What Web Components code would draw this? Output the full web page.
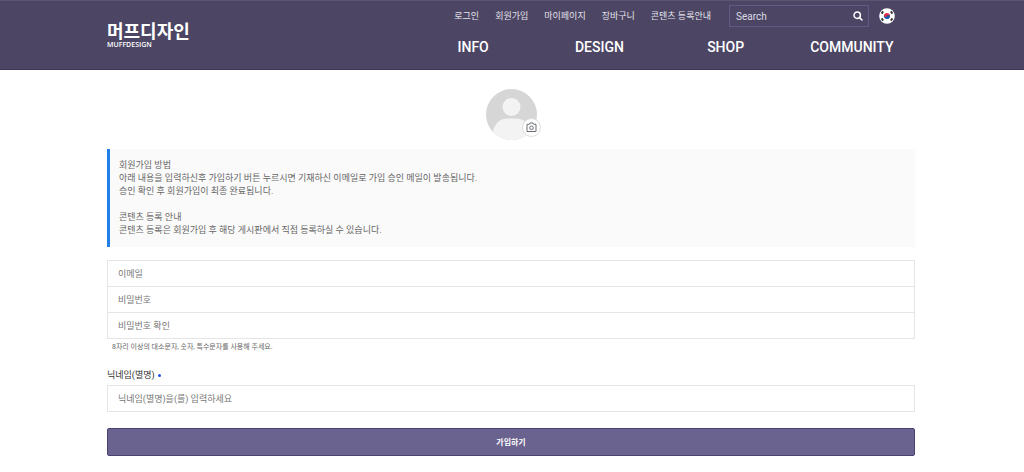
<!DOCTYPE html>
<html lang="ko">
<head>
<meta charset="utf-8">
<meta name="viewport" content="width=device-width, initial-scale=1">
<title>회원가입 - 머프디자인</title>
<style>
body {
  margin: 0;
  background: #fff;
  color: #666;
  font: 9px/13px Roboto, "Noto Sans CJK KR", sans-serif;
  --gutter: 0 109px 0 107px;
  --line: #e5e5e5;
}
</style>
</head>
<body>
<site-header></site-header>
<join-form></join-form>

<script>
function define(name, html, setup) {
  customElements.define(name, class extends HTMLElement {
    constructor() {
      super();
      this.attachShadow({ mode: 'open' }).innerHTML =
        '<style>*{box-sizing:border-box}a{color:inherit;text-decoration:none}input,button{font:inherit;margin:0}</style>' + html;
      if (setup) setup(this, this.shadowRoot);
    }
  });
}

define('site-logo', `
<style>
:host { display: block; color: #fff; }
a { display: flex; flex-direction: column; }
.ko { font: 700 18px/22px "Noto Sans CJK KR", sans-serif; }
.en { font: 600 7px/8px "Open Sans", sans-serif; }
</style>
<a href="#home"><span class="ko">머프디자인</span><span class="en">MUFFDESIGN</span></a>`);

define('search-box', `
<style>
:host { display: block; }
form { display: flex; align-items: center; width: 140px; height: 22px; padding: 0 5px 0 6px; border: 1px solid #625a84; }
input { flex: 1; min-width: 0; height: 20px; padding: 0; border: 0; outline: 0; background: none; color: #fff; font-size: 10px; }
input::placeholder { color: #dcdae4; opacity: 1; }
button { display: flex; padding: 0; border: 0; background: none; color: #fff; }
</style>
<form role="search"><input type="text" placeholder="Search" aria-label="Search">
<button type="button" aria-label="검색"><svg width="10" height="10" viewBox="0 0 10 10" fill="none" stroke="currentColor" stroke-width="1.5" stroke-linecap="round"><circle cx="4.2" cy="4.2" r="3.2"/><path d="M6.6 6.6 9 9"/></svg></button></form>`);

define('korea-flag', `
<style>:host, a { display: flex; }</style>
<a href="#ko" aria-label="한국어"><svg width="16" height="16" viewBox="0 0 16 16">
<circle cx="8" cy="8" r="7.8" fill="#fff"/>
<g transform="rotate(25 8 8)"><path d="M5 8a3 3 0 0 1 6 0z" fill="#e0303f"/><path d="M5 8a3 3 0 0 0 6 0z" fill="#1558b0"/><circle cx="6.5" cy="8" r="1.5" fill="#e0303f"/><circle cx="9.5" cy="8" r="1.5" fill="#1558b0"/></g>
<path d="m2.600 5.600 1.600-2.200M13.400 5.600l-1.600-2.200M2.600 10.400l1.600 2.200M13.400 10.400l-1.600 2.200" stroke="#333" stroke-width="1.800"/>
</svg></a>`);

define('site-header', `
<style>
:host { display: block; background: #4c4664; border-top: 1px solid #5b5573; border-bottom: 1px solid #3d375a; color: #fff; }
.inner { display: flex; justify-content: space-between; min-height: 68px; padding: var(--gutter); }
site-logo { padding-top: 18px; }
.right { display: flex; flex-direction: column; width: 505px; }
.top { display: flex; align-items: center; justify-content: flex-end; padding: 4px 20px 0 0; }
.links { display: flex; gap: 16px; margin-right: 18px; color: #e4e2ea; white-space: nowrap; }
search-box { margin-right: 10px; }
.main { display: grid; grid-template-columns: repeat(4, 1fr); padding-top: 10px; font: 500 14px/20px Roboto, sans-serif; text-align: center; }
</style>
<header class="inner">
<site-logo></site-logo>
<div class="right">
<div class="top"><nav class="links" aria-label="회원 메뉴"><a href="#login">로그인</a><a href="#join">회원가입</a><a href="#my">마이페이지</a><a href="#cart">장바구니</a><a href="#guide">콘텐츠 등록안내</a></nav><search-box></search-box><korea-flag></korea-flag></div>
<nav class="main" aria-label="주 메뉴"><a href="#info">INFO</a><a href="#design">DESIGN</a><a href="#shop">SHOP</a><a href="#community">COMMUNITY</a></nav>
</div>
</header>`);

define('profile-photo', `
<style>
:host { display: block; position: relative; width: 51px; height: 51px; }
svg { display: block; }
button { position: absolute; right: -4px; bottom: 3px; display: flex; align-items: center; justify-content: center; width: 19px; height: 19px; padding: 0; border: 1px solid #ddd; border-radius: 50%; background: #fff; color: #6b6e76; }
</style>
<svg width="51" height="51" viewBox="0 0 51 51" role="img" aria-label="프로필"><defs><clipPath id="c"><circle cx="25.5" cy="25.5" r="25.5"/></clipPath></defs>
<g clip-path="url(#c)"><path fill="#d6d6d6" d="M0 0h51v51H0z"/><circle cx="25.5" cy="18" r="9" fill="#f3f3f3"/><path fill="#f3f3f3" d="M6 51V45C9 33 15 29.5 21 29.5h9c7 0 12 4 15 15.500V51z"/></g></svg>
<button type="button" aria-label="사진 변경"><svg width="11" height="11" viewBox="0 0 11 11" fill="none" stroke="currentColor" stroke-width="1"><path d="M3.300 2.300 4 1h3l.7 1.300h2.300v7.200H1V2.300z" stroke-linejoin="round"/><circle cx="5.500" cy="5.800" r="1.800"/></svg></button>`);

define('info-note', `
<style>
:host { display: block; padding: 10px 9px; border-left: 3px solid #2080e8; background: #fafafa; color: #666; }
::slotted(p) { margin: 0 0 13px; }
::slotted(p:last-child) { margin: 0; }
</style><slot></slot>`);

define('text-field', `
<style>
:host { display: block; }
input { display: block; width: 100%; height: 27px; padding: 0 10px; border: 1px solid var(--line); border-radius: 0; outline: 0; background: #fff; color: #333; }
input::placeholder { color: #777; opacity: 1; }
label { display: flex; align-items: center; gap: 3px; margin-bottom: 3px; color: #333; }
label[hidden] { display: none; }
i { width: 3px; height: 3px; border-radius: 50%; background: #1a50f0; }
</style><label for="f"><slot></slot><i></i></label><input id="f">`, (el, root) => {
  const input = root.querySelector('input');
  input.type = el.getAttribute('type') || 'text';
  input.placeholder = el.getAttribute('placeholder');
  if (!el.hasAttribute('required')) {
    root.querySelector('label').hidden = true;
    input.setAttribute('aria-label', input.placeholder);
  }
});

define('join-form', `
<style>
:host { display: block; padding: var(--gutter); }
form { display: flex; flex-direction: column; padding: 19px 0 16px; }
profile-photo { align-self: center; margin-bottom: 9px; }
info-note { margin-bottom: 13px; }
.group { display: flex; flex-direction: column; }
.group text-field + text-field { margin-top: -1px; }
.help { margin: 2px 5px 15px; font-size: 7px; }
.submit { height: 28px; margin-top: 16px; padding: 0; border: 1px solid #4b4274; border-radius: 2px; background: #6b638f; color: #fff; font-size: 8px; font-weight: 700; }
</style>
<form>
<profile-photo></profile-photo>
<info-note><p>회원가입 방법<br>아래 내용을 입력하신후 가입하기 버튼 누르시면 기재하신 이메일로 가입 승인 메일이 발송됩니다.<br>승인 확인 후 회원가입이 최종 완료됩니다.</p><p>콘텐츠 등록 안내<br>콘텐츠 등록은 회원가입 후 해당 게시판에서 직접 등록하실 수 있습니다.</p></info-note>
<div class="group"><text-field type="email" placeholder="이메일"></text-field><text-field type="password" placeholder="비밀번호"></text-field><text-field type="password" placeholder="비밀번호 확인"></text-field></div>
<p class="help">8자리 이상의 대소문자, 숫자, 특수문자를 사용해 주세요.</p>
<text-field required placeholder="닉네임(별명)을(를) 입력하세요">닉네임(별명)</text-field>
<button class="submit" type="button">가입하기</button>
</form>`);
</script>
</body>
</html>
